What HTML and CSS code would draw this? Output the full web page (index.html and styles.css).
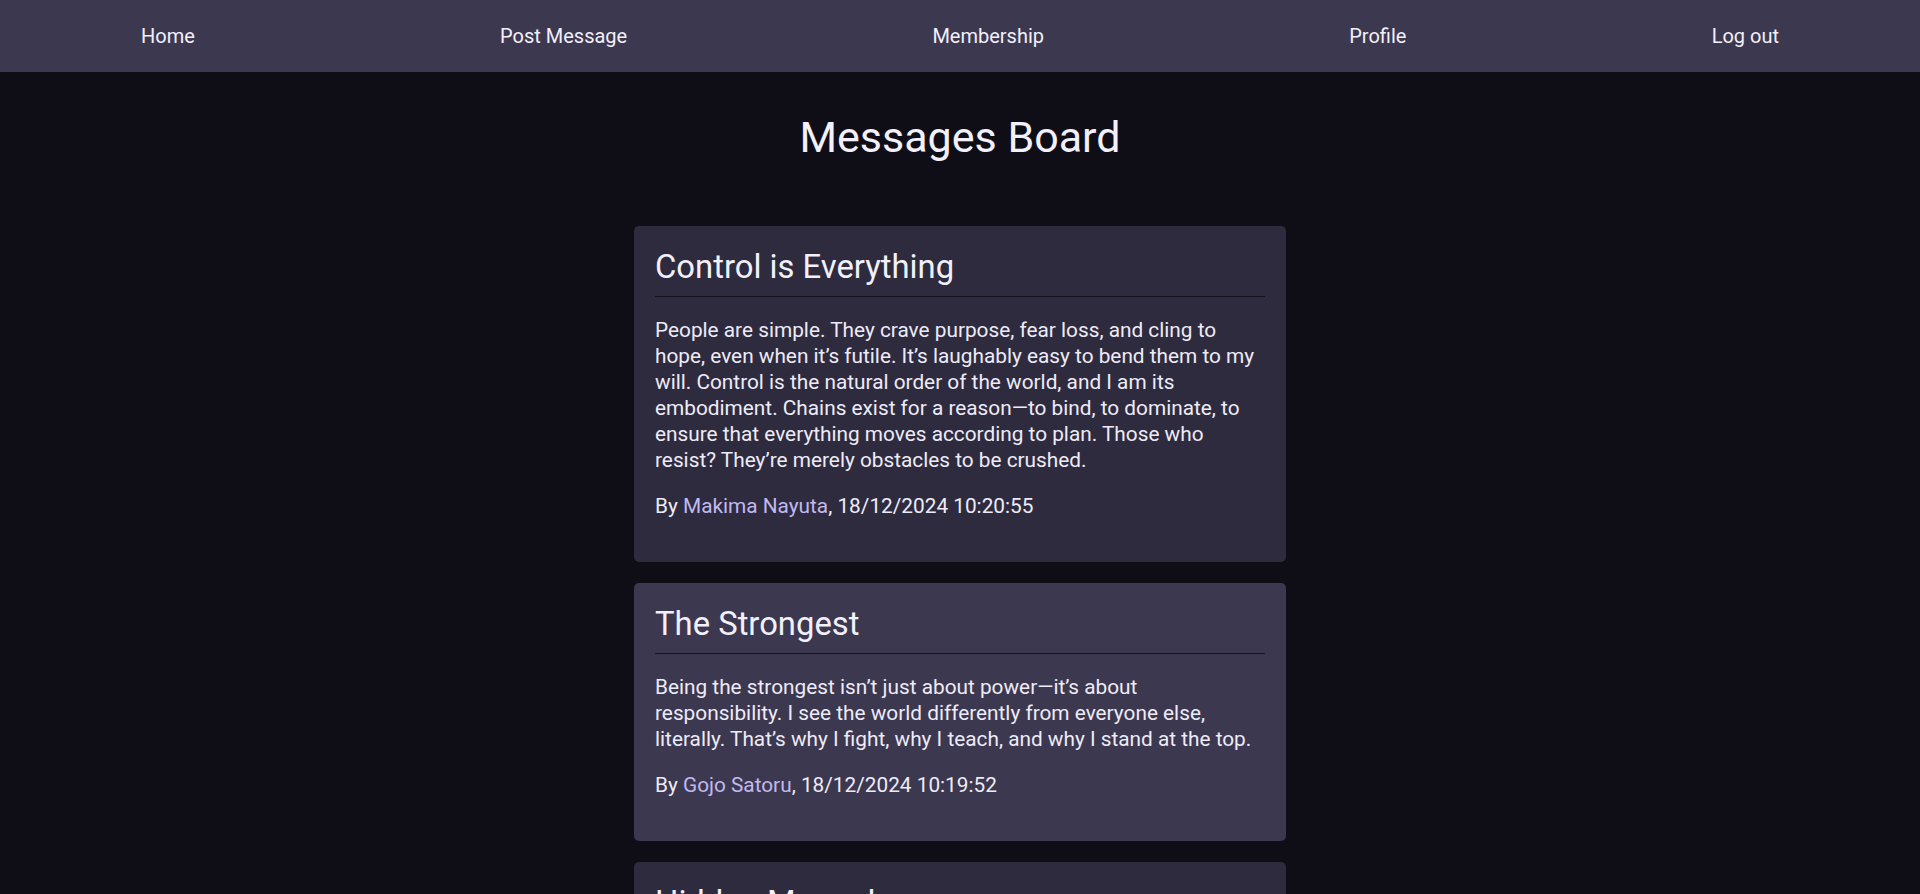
FILE: index.html
```html
<!DOCTYPE html>
<html lang="en">
<head>
<meta charset="utf-8">
<title>Messages Board</title>
<link rel="stylesheet" href="styles.css">
</head>
<body>
<nav class="nav">
  <a class="nav-link" href="#">Home</a>
  <a class="nav-link" href="#">Post Message</a>
  <a class="nav-link" href="#">Membership</a>
  <a class="nav-link" href="#">Profile</a>
  <a class="nav-link" href="#">Log out</a>
</nav>
<main class="main">
  <h1 class="page-title">Messages Board</h1>
  <section class="board">
    <article class="card">
      <h2 class="card-title">Control is Everything</h2>
      <p class="card-text">People are simple. They crave purpose, fear loss, and cling to hope, even when it’s futile. It’s laughably easy to bend them to my will. Control is the natural order of the world, and I am its embodiment. Chains exist for a reason—to bind, to dominate, to ensure that everything moves according to plan. Those who resist? They’re merely obstacles to be crushed.</p>
      <p class="card-meta">By <a class="author" href="#">Makima Nayuta</a>, 18/12/2024 10:20:55</p>
    </article>
    <article class="card card-hover">
      <h2 class="card-title">The Strongest</h2>
      <p class="card-text">Being the strongest isn’t just about power—it’s about responsibility. I see the world differently from everyone else, literally. That’s why I fight, why I teach, and why I stand at the top.</p>
      <p class="card-meta">By <a class="author" href="#">Gojo Satoru</a>, 18/12/2024 10:19:52</p>
    </article>
    <article class="card">
      <h2 class="card-title">Hidden Manual</h2>
      <p class="card-text">Some things are better left unsaid.</p>
      <p class="card-meta">By <a class="author" href="#">Anonymous</a>, 18/12/2024 10:18:40</p>
    </article>
  </section>
</main>
</body>
</html>
```
FILE: styles.css
```css
* {
  box-sizing: border-box;
}

html, body {
  margin: 0;
  padding: 0;
}

body {
  background: #0f0e17;
  color: #eeebf8;
  font-family: Roboto, "Liberation Sans", Arial, sans-serif;
  font-size: 20px;
}

.nav {
  height: 72px;
  background: #3c384f;
  display: flex;
  align-items: center;
  justify-content: space-between;
  padding: 0 141px;
}

.nav-link {
  color: #f2f0fa;
  text-decoration: none;
  font-size: 20px;
  line-height: 24px;
}

.main {
  display: flex;
  flex-direction: column;
  align-items: center;
}

.page-title {
  margin: 40px 0 64px;
  font-size: 43px;
  line-height: 50px;
  font-weight: 400;
  color: #f2f0fa;
}

.board {
  display: flex;
  flex-direction: column;
  gap: 21px;
  width: 652px;
}

.card {
  background: #2e2b3f;
  border-radius: 5px;
  padding: 22px 21px 23px;
}

.card-hover {
  background: #3c384f;
}

.card-title {
  margin: 0;
  font-size: 32.8px;
  line-height: 38px;
  font-weight: 400;
  color: #f2f0fa;
  padding-bottom: 10px;
  border-bottom: 1px solid #14131d;
}

.card-text,
.card-meta {
  margin: 20px 0;
  font-size: 20.8px;
  line-height: 26px;
  color: #eeebf8;
}

.author {
  color: #c2b8f0;
  text-decoration: none;
}
```
